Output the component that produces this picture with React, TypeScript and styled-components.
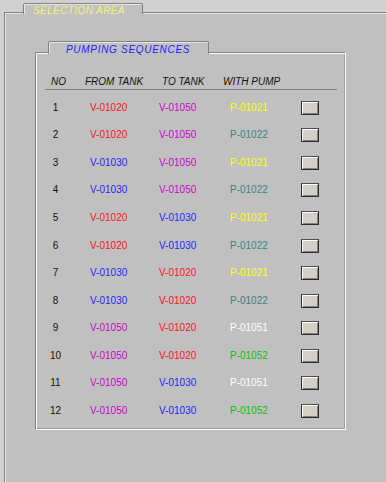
import React from "react";
import styled, { createGlobalStyle } from "styled-components";

const GlobalStyle = createGlobalStyle`
  html, body {
    margin: 0;
    padding: 0;
    background: #d0d0d0;
    overflow: hidden;
  }
  body {
    font-family: "Liberation Sans", Arial, sans-serif;
  }
`;

const Page = styled.div`
  width: 386px;
  height: 482px;
  overflow: hidden;
  padding: 3px 0 0 4px;
  box-sizing: border-box;
`;

const Group = styled.div`
  display: flex;
  flex-direction: column;
`;

const TabRow = styled.div<{ $indent: number }>`
  display: flex;
  padding-left: ${(p) => p.$indent}px;
`;

const Tab = styled.div<{ $width: number; $height: number; $pad: number }>`
  position: relative;
  z-index: 1;
  box-sizing: border-box;
  width: ${(p) => p.$width}px;
  height: ${(p) => p.$height}px;
  margin-bottom: -2px;
  background: #c0c0c0;
  border: 1px solid #808080;
  border-bottom: none;
  border-top-left-radius: 2px;
  border-top-right-radius: 2px;
  box-shadow: inset 1px 1px 0 #e8e8e8;
  padding-left: ${(p) => p.$pad}px;
  white-space: nowrap;
`;

const TabTitle = styled.span<{ $color: string; $spacing: number; $lh: number }>`
  display: block;
  font-size: 10px;
  font-style: italic;
  line-height: ${(p) => p.$lh}px;
  letter-spacing: ${(p) => p.$spacing}px;
  color: ${(p) => p.$color};
`;

const OuterBody = styled.div`
  box-sizing: border-box;
  height: 470px;
  width: 400px;
  background: #c0c0c0;
  border-top: 1px solid #808080;
  border-left: 1px solid #808080;
  box-shadow: inset 1px 1px 0 #e4e4e4;
  padding: 28px 0 0 30px;
`;

const InnerBody = styled.div`
  box-sizing: border-box;
  width: 311px;
  height: 378px;
  background: #c0c0c0;
  border: 1px solid;
  border-color: #808080 #ffffff #ffffff #808080;
  box-shadow: inset 1px 1px 0 #ffffff, inset -1px -1px 0 #a0a0a0;
  padding-left: 9px;
`;

const Table = styled.div`
  width: 292px;
`;

const HeaderRow = styled.div`
  box-sizing: border-box;
  height: 37px;
  display: grid;
  grid-template-columns: 45px 69px 71px 71px 18px;
  align-items: end;
  padding-bottom: 1px;
  border-bottom: 1px solid #808080;
`;

const HeaderCell = styled.div<{ $shift: number }>`
  font-size: 10px;
  font-style: italic;
  line-height: 12px;
  color: #101010;
  white-space: nowrap;
  margin-left: ${(p) => p.$shift}px;
`;

const Rows = styled.div`
  padding-top: 4px;
`;

const Row = styled.div`
  height: 27.55px;
  display: grid;
  grid-template-columns: 45px 69px 71px 71px 18px;
  align-items: center;
`;

const NoCell = styled.div`
  width: 21px;
  text-align: center;
  font-size: 10px;
  line-height: 12px;
  color: #101010;
`;

const ValueCell = styled.div<{ $color: string }>`
  font-size: 10px;
  line-height: 12px;
  color: ${(p) => p.$color};
  white-space: nowrap;
`;

const SelectButton = styled.button`
  box-sizing: border-box;
  width: 18px;
  height: 14px;
  padding: 0;
  background: #d4d0c8;
  border: 1px solid #2c2c2c;
  border-top-color: #505050;
  box-shadow: inset 1px 1px 0 #ffffff, inset -1px -1px 0 #808080;
  cursor: pointer;
`;

const C = {
  red: "#ff1020",
  magenta: "#cc00cc",
  blue: "#2424ff",
  yellow: "#ffff00",
  teal: "#3c8080",
  white: "#ffffff",
  green: "#00c400",
};

const tankColor: Record<string, string> = {
  "V-01020": C.red,
  "V-01030": C.blue,
  "V-01050": C.magenta,
};

const pumpColor: Record<string, string> = {
  "P-01021": C.yellow,
  "P-01022": C.teal,
  "P-01051": C.white,
  "P-01052": C.green,
};

const rows: [string, string, string][] = [
  ["V-01020", "V-01050", "P-01021"],
  ["V-01020", "V-01050", "P-01022"],
  ["V-01030", "V-01050", "P-01021"],
  ["V-01030", "V-01050", "P-01022"],
  ["V-01020", "V-01030", "P-01021"],
  ["V-01020", "V-01030", "P-01022"],
  ["V-01030", "V-01020", "P-01021"],
  ["V-01030", "V-01020", "P-01022"],
  ["V-01050", "V-01020", "P-01051"],
  ["V-01050", "V-01020", "P-01052"],
  ["V-01050", "V-01030", "P-01051"],
  ["V-01050", "V-01030", "P-01052"],
];

export default function App() {
  return (
    <>
      <GlobalStyle />
      <Page>
        <Group>
          <TabRow $indent={19}>
            <Tab $width={120} $height={11} $pad={9}>
              <TabTitle $color="#f2f27a" $spacing={0.4} $lh={13}>
                SELECTION AREA
              </TabTitle>
            </Tab>
          </TabRow>
          <OuterBody>
            <Group>
              <TabRow $indent={13}>
                <Tab $width={161} $height={13} $pad={17}>
                  <TabTitle $color="#2020ff" $spacing={0.7} $lh={16}>
                    PUMPING SEQUENCES
                  </TabTitle>
                </Tab>
              </TabRow>
              <InnerBody>
                <Table>
                  <HeaderRow>
                    <HeaderCell $shift={6}>NO</HeaderCell>
                    <HeaderCell $shift={-5}>FROM TANK</HeaderCell>
                    <HeaderCell $shift={3}>TO TANK</HeaderCell>
                    <HeaderCell $shift={-7}>WITH PUMP</HeaderCell>
                    <span />
                  </HeaderRow>
                  <Rows>
                    {rows.map(([from, to, pump], i) => (
                      <Row key={i}>
                        <NoCell>{i + 1}</NoCell>
                        <ValueCell $color={tankColor[from]}>{from}</ValueCell>
                        <ValueCell $color={tankColor[to]}>{to}</ValueCell>
                        <ValueCell $color={pumpColor[pump]}>{pump}</ValueCell>
                        <SelectButton aria-label={`Select sequence ${i + 1}`} />
                      </Row>
                    ))}
                  </Rows>
                </Table>
              </InnerBody>
            </Group>
          </OuterBody>
        </Group>
      </Page>
    </>
  );
}
